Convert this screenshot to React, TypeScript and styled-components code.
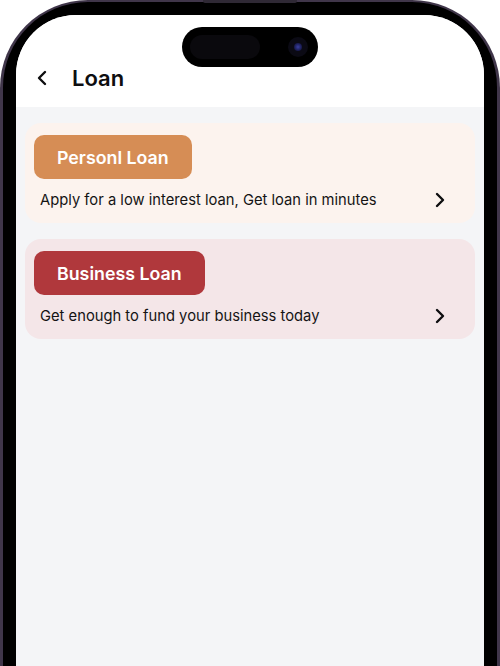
import React from "react";
import styled, { createGlobalStyle } from "styled-components";

const Global = createGlobalStyle`
  html, body { margin: 0; padding: 0; background: #ffffff; }
  body { width: 500px; height: 666px; overflow: hidden; font-family: Inter, "Noto Sans", sans-serif; }
  * { box-sizing: border-box; }
`;

const Rim = styled.div`
  position: relative;
  width: 500px;
  height: 666px;
  padding: 2px 3px 0;
  border-radius: 88px 88px 0 0;
  background: #40364a;
`;

const TopButton = styled.div`
  position: absolute;
  top: 0;
  left: 203px;
  width: 94px;
  height: 3px;
  border-radius: 0 0 2px 2px;
  background: #2f2935;
`;

const Bezel = styled.div`
  height: 100%;
  padding: 13px 13px 0;
  border-radius: 85px 85px 0 0;
  background: #000;
`;

const Screen = styled.div`
  position: relative;
  height: 100%;
  border-radius: 60px 60px 0 0;
  background: #f4f5f7;
  overflow: hidden;
  display: flex;
  flex-direction: column;
`;

const Island = styled.div`
  position: absolute;
  top: 12px;
  left: 166px;
  width: 136px;
  height: 40px;
  border-radius: 20px;
  background: #000;
  display: flex;
  align-items: center;
  justify-content: space-between;
  padding: 0 10px 0 8px;
`;

const IslandSensor = styled.div`
  width: 70px;
  height: 24px;
  border-radius: 12px;
  background: #0a090d;
`;

const Camera = styled.div`
  width: 20px;
  height: 20px;
  border-radius: 50%;
  background: #0b0a14;
  display: flex;
  align-items: center;
  justify-content: center;
  &::after {
    content: "";
    width: 8px;
    height: 8px;
    border-radius: 50%;
    background: radial-gradient(circle at 50% 50%, #3a3fa0 0%, #1b1d55 60%, #0b0a20 100%);
  }
`;

const Header = styled.header`
  height: 92px;
  flex-shrink: 0;
  background: #ffffff;
  display: flex;
  align-items: flex-end;
  padding: 0 0 15px 20px;
  gap: 24px;
`;

const BackButton = styled.button`
  border: 0;
  background: transparent;
  padding: 0;
  width: 12px;
  height: 24px;
  display: flex;
  align-items: center;
  justify-content: center;
  margin-bottom: 2px;
`;

const Title = styled.h1`
  margin: 0;
  font-family: Inter, sans-serif;
  font-size: 22px;
  font-weight: 600;
  color: #0e0e10;
  line-height: 28px;
`;

const Content = styled.main`
  flex: 1;
  padding: 16px 9px;
  display: flex;
  flex-direction: column;
  gap: 16px;
`;

const Card = styled.div<{ $bg: string }>`
  height: 100px;
  border-radius: 16px;
  background: ${(p) => p.$bg};
  padding: 12px 9px 4px;
  display: flex;
  flex-direction: column;
  align-items: flex-start;
`;

const Badge = styled.div<{ $bg: string }>`
  height: 45px;
  padding: 0 23px;
  border-radius: 10px;
  background: ${(p) => p.$bg};
  color: #ffffff;
  font-family: Inter, sans-serif;
  font-size: 17.8px;
  font-weight: 600;
  display: flex;
  align-items: center;
`;

const Row = styled.div`
  align-self: stretch;
  height: 40px;
  display: flex;
  align-items: center;
  justify-content: space-between;
  padding: 2px 20px 0 6px;
`;

const Desc = styled.span`
  font-family: Inter, sans-serif;
  font-size: 14.75px;
  font-weight: 400;
  color: #141414;
`;

const Chevron = ({ dir }: { dir: "left" | "right" }) => (
  <svg width="12" height="16" viewBox="0 0 12 16" fill="none">
    <path
      d={dir === "left" ? "M9 2 L3 8 L9 14" : "M3 2 L9 8 L3 14"}
      stroke="#0e0e10"
      strokeWidth="2.4"
      strokeLinecap="round"
      strokeLinejoin="round"
    />
  </svg>
);

const loans = [
  { title: "Personl Loan", desc: "Apply for a low interest loan, Get loan in minutes", bg: "#fcf3ee", badge: "#d68d55" },
  { title: "Business Loan", desc: "Get enough to fund your business today", bg: "#f4e6e8", badge: "#b0383c" },
];

export default function App() {
  return (
    <>
      <Global />
      <Rim>
        <TopButton />
        <Bezel>
          <Screen>
            <Header>
              <BackButton aria-label="Back">
                <Chevron dir="left" />
              </BackButton>
              <Title>Loan</Title>
            </Header>
            <Content>
              {loans.map((l) => (
                <Card key={l.title} $bg={l.bg}>
                  <Badge $bg={l.badge}>{l.title}</Badge>
                  <Row>
                    <Desc>{l.desc}</Desc>
                    <Chevron dir="right" />
                  </Row>
                </Card>
              ))}
            </Content>
            <Island>
              <IslandSensor />
              <Camera />
            </Island>
          </Screen>
        </Bezel>
      </Rim>
    </>
  );
}
